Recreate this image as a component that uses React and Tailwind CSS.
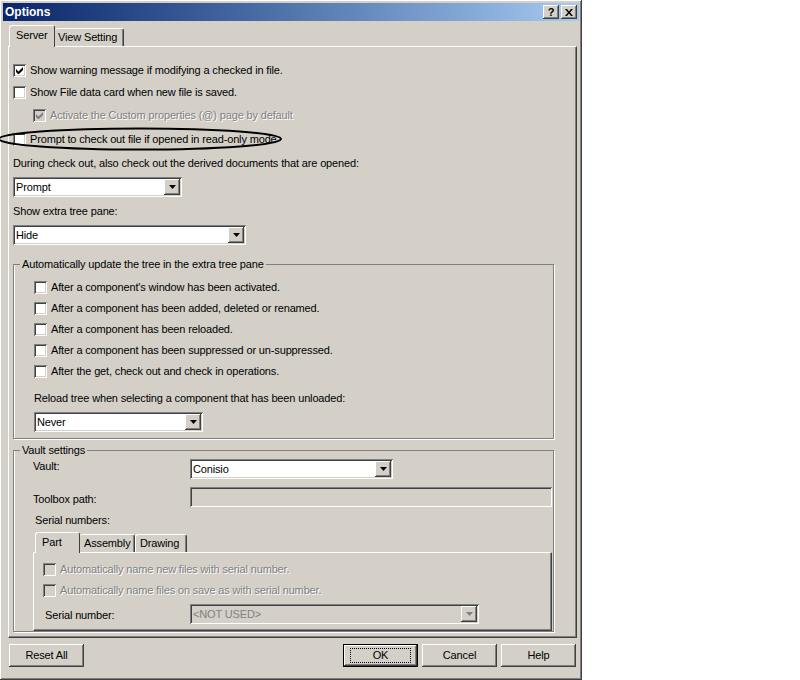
import React from "react";

const raised = "shadow-[inset_-1px_-1px_0_#404040,inset_1px_1px_0_#fff,inset_-2px_-2px_0_#808080,inset_2px_2px_0_#d4d0c8]";
const sunken = "shadow-[inset_1px_1px_0_#808080,inset_-1px_-1px_0_#fff,inset_2px_2px_0_#404040,inset_-2px_-2px_0_#d4d0c8]";

function Check({ checked, disabled }) {
    return (
        <div className={`w-[13px] h-[13px] shrink-0 flex items-center justify-center ${sunken} ${disabled ? "bg-[#d4d0c8]" : "bg-white"}`}>
            {checked && (
                <svg width="7" height="7" viewBox="0 0 7 7">
                    <path d="M0 2v3l2 2h1l4-4V0L2.5 4.5z" fill={disabled ? "#808080" : "#000"} />
                </svg>
            )}
        </div>
    );
}

function CheckRow({ label, checked, disabled, className = "" }) {
    return (
        <div className={`flex items-center h-[16px] ${className}`}>
            <Check checked={checked} disabled={disabled} />
            <span className={`ml-[4px] ${disabled ? "text-[#808080] [text-shadow:1px_1px_0_#fff]" : ""}`}>{label}</span>
        </div>
    );
}

function Arrow({ disabled }) {
    return (
        <div className={`w-[16px] h-[16px] bg-[#d4d0c8] flex items-center justify-center ${raised}`}>
            <svg width="7" height="4" viewBox="0 0 7 4">
                <path d="M0 0h7L3.5 4z" fill={disabled ? "#808080" : "#000"} />
            </svg>
        </div>
    );
}

function Combo({ value, width, disabled }) {
    return (
        <div className={`h-[20px] flex items-center p-[2px] ${sunken} ${disabled ? "bg-[#d4d0c8]" : "bg-white"}`} style={{ width }}>
            <span className={`flex-1 pl-[1px] ${disabled ? "text-[#808080]" : ""}`}>{value}</span>
            <Arrow disabled={disabled} />
        </div>
    );
}

function Button({ children, def, className = "" }) {
    return (
        <div className={`w-[75px] h-[23px] flex items-center justify-center bg-[#d4d0c8] ${def ? "border border-black shadow-[inset_-1px_-1px_0_#404040,inset_1px_1px_0_#fff,inset_-2px_-2px_0_#808080]" : raised} ${className}`}>
            {def ? (
                <span className="border border-dotted border-black w-[61px] h-[15px] flex items-center justify-center">{children}</span>
            ) : children}
        </div>
    );
}

function Group({ title, className = "", inner = "", children }) {
    return (
        <fieldset className={`border border-[#808080] shadow-[1px_1px_0_#fff,inset_1px_0_0_#fff] ${className}`}>
            <legend className="ml-[6px] px-[2px] leading-[13px]">{title}</legend>
            <div className={`flex flex-col ${inner}`}>{children}</div>
        </fieldset>
    );
}

export default function App() {
    return (
        <div className="w-[800px] h-[680px] bg-white relative font-['Liberation_Sans',Arial,sans-serif] text-[11px] tracking-[-0.15px] text-black leading-none">
            <div className={`w-[582px] h-[680px] bg-[#d4d0c8] flex flex-col ${raised}`}>
                {/* title bar */}
                <div className="mx-[3px] mt-[3px] h-[18px] bg-gradient-to-r from-[#0a246a] to-[#a6caf0] flex items-center justify-between">
                    <span className="pl-[2px] text-white font-bold text-[12px] tracking-normal">Options</span>
                    <div className="flex gap-[2px] mr-[2px]">
                        <div className={`w-[16px] h-[14px] bg-[#d4d0c8] flex items-center justify-center font-bold text-[11px] ${raised}`}>?</div>
                        <div className={`w-[16px] h-[14px] bg-[#d4d0c8] flex items-center justify-center ${raised}`}>
                            <svg width="8" height="7" viewBox="0 0 8 7">
                                <path d="M0 0h2l2 2.5L6 0h2L5 3.5 8 7H6L4 4.5 2 7H0l3-3.5z" fill="#000" />
                            </svg>
                        </div>
                    </div>
                </div>

                {/* tabs */}
                <div className="flex items-end mt-[4px] ml-[9px] relative z-10">
                    <div className="h-[22px] w-[46px] bg-[#d4d0c8] border-t border-l border-white border-r border-r-[#404040] rounded-t-[3px] pl-[6px] pt-[4px] mb-[-1px]">Server</div>
                    <div className="h-[18px] w-[69px] bg-[#d4d0c8] border-t border-white border-r border-r-[#404040] shadow-[inset_-1px_0_0_#808080] rounded-t-[3px] pl-[3px] pt-[3px]">View Setting</div>
                </div>

                {/* panel */}
                <div className="ml-[8px] w-[569px] h-[592px] border-t border-l border-white border-r border-b border-r-[#404040] border-b-[#404040] shadow-[inset_-1px_-1px_0_#808080] flex flex-col pl-[4px]">
                    <CheckRow className="mt-[15px]" checked label="Show warning message if modifying a checked in file." />
                    <CheckRow className="mt-[6px]" label="Show File data card when new file is saved." />
                    <CheckRow className="mt-[7px] ml-[20px]" checked disabled label="Activate the Custom properties (@) page by default" />
                    <CheckRow className="mt-[8px]" label="Prompt to check out file if opened in read-only mode" />
                    <div className="mt-[9px] h-[14px] flex items-center">During check out, also check out the derived documents that are opened:</div>
                    <div className="mt-[7px]"><Combo value="Prompt" width={169} /></div>
                    <div className="mt-[7px] h-[14px] flex items-center">Show extra tree pane:</div>
                    <div className="mt-[7px]"><Combo value="Hide" width={233} /></div>

                    <Group title="Automatically update the tree in the extra tree pane" className="mt-[13px] w-[541px] h-[181px]" inner="pl-[20px]">
                        <CheckRow className="mt-[8px]" label="After a component's window has been activated." />
                        <CheckRow className="mt-[5px]" label="After a component has been added, deleted or renamed." />
                        <CheckRow className="mt-[5px]" label="After a component has been reloaded." />
                        <CheckRow className="mt-[5px]" label="After a component has been suppressed or un-suppressed." />
                        <CheckRow className="mt-[5px]" label="After the get, check out and check in operations." />
                        <div className="mt-[12px] h-[14px] flex items-center">Reload tree when selecting a component that has been unloaded:</div>
                        <div className="mt-[7px]"><Combo value="Never" width={169} /></div>
                    </Group>

                    <Group title="Vault settings" className="mt-[5px] w-[541px] h-[188px]" inner="pl-[19px]">
                        <div className="flex mt-[2px]">
                            <span className="w-[157px] mt-[2px]">Vault:</span>
                            <Combo value="Conisio" width={203} />
                        </div>
                        <div className="flex items-end mt-[8px]">
                            <span className="w-[157px] mb-[2px]">Toolbox path:</span>
                            <div className={`w-[362px] h-[20px] bg-[#d4d0c8] ${sunken}`} />
                        </div>
                        <div className="mt-[6px] ml-[2px] h-[14px] flex items-center">Serial numbers:</div>

                        <div className="flex items-end mt-[5px] ml-[2px] relative z-10">
                            <div className="h-[21px] w-[45px] bg-[#d4d0c8] border-t border-l border-white border-r border-r-[#404040] rounded-t-[3px] pl-[6px] pt-[4px] mb-[-1px]">Part</div>
                            <div className="h-[18px] w-[55px] bg-[#d4d0c8] border-t border-white border-r border-r-[#404040] shadow-[inset_-1px_0_0_#808080] rounded-t-[3px] pl-[4px] pt-[3px]">Assembly</div>
                            <div className="h-[18px] w-[52px] bg-[#d4d0c8] border-t border-l border-white border-r border-r-[#404040] shadow-[inset_-1px_0_0_#808080] rounded-t-[3px] pl-[4px] pt-[3px]">Drawing</div>
                        </div>
                        <div className="w-[519px] h-[79px] border-t border-l border-white border-r border-b border-r-[#404040] border-b-[#404040] shadow-[inset_-1px_-1px_0_#808080] flex flex-col pl-[9px]">
                            <CheckRow className="mt-[8px]" disabled label="Automatically name new files with serial number." />
                            <CheckRow className="mt-[5px]" disabled label="Automatically name files on save as with serial number." />
                            <div className="flex items-center mt-[6px]">
                                <span className="w-[145px] ml-[2px] mt-[3px]">Serial number:</span>
                                <Combo value="<NOT USED>" width={289} disabled />
                            </div>
                        </div>
                    </Group>
                </div>

                {/* buttons */}
                <div className="flex mt-[6px] ml-[9px]">
                    <Button>Reset All</Button>
                    <div className="flex-1" />
                    <Button def>OK</Button>
                    <Button className="ml-[4px]">Cancel</Button>
                    <Button className="ml-[4px] mr-[6px]">Help</Button>
                </div>
            </div>

            {/* hand-drawn annotation */}
            <svg className="absolute left-0 top-[126px]" width="300" height="28" viewBox="0 0 300 28">
                <ellipse cx="140" cy="13" rx="141" ry="10.5" fill="none" stroke="#000" strokeWidth="2" />
            </svg>
        </div>
    );
}
